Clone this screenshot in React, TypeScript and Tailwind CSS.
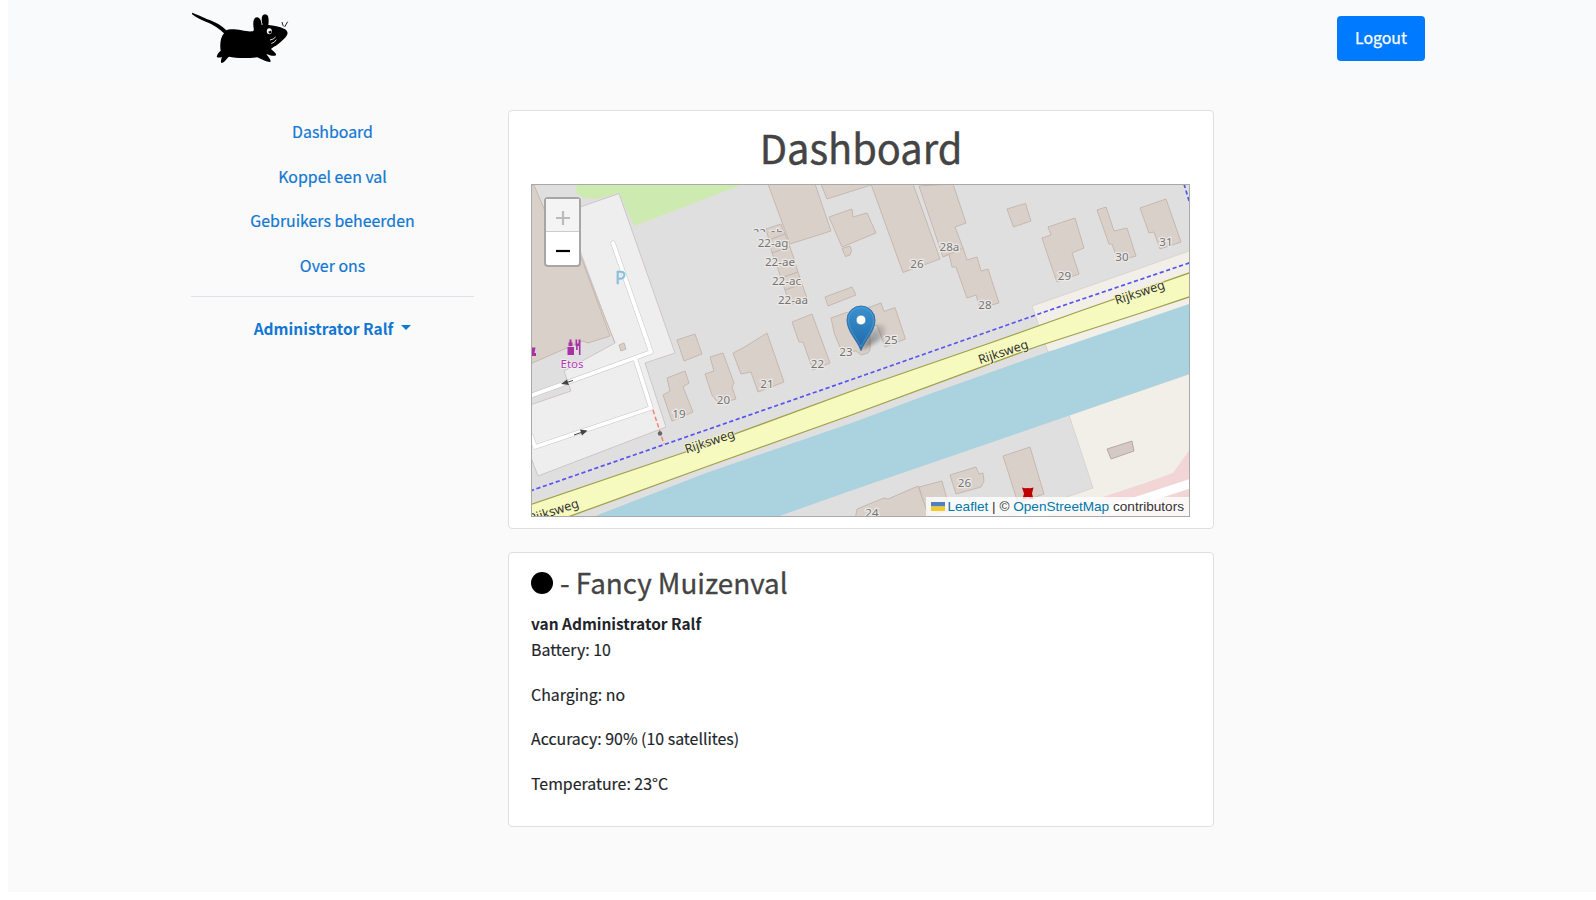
import React from 'react';

const buildings: string[] = [
  '530,185 534,185 545,211 562,205 610,336 588,343 583,341 530,364',
  '768,184 815,184 831,231 790,244',
  '821,184 827,199 871,185 871,184',
  '829,217 852,209 853,217 867,213 876,233 842,247',
  '871,184 903,272.5 940,259 913,184',
  '919,186 953,184 966,223 955,227 963,248 967,260 977,257 981,271 988,269 999,303 980,308 976,295 967,298 956,267 952,267 949,254 943,257',
  '1007,209 1025.5,203.5 1031,221 1013.5,227',
  '1048,227 1075,218 1084,248 1072,253 1079,274 1057,282 1050,262 1042,238 1051,235',
  '1097,210 1106,207 1114,231 1127,228 1136,256 1118,261 1112,244 1109,244',
  '1140,208 1166,199 1181,242 1160,249 1154,232 1149,233',
  '825,297 852,287 856,295 828,306',
  '677,340 695,334 702,354 684,361',
  '667,378 685,371 689,383 683,387 693,412 672,421 663,395 670,391',
  '710,357 723,353 734,383 732,387 736,399 719,404 712,395 705,374 714,371',
  '733,353 743,348 767,333 784,382 758,392 751,372 741,374',
  '792,322 812,314 830,363 813,370 803,342 799,342',
  '831,318 845,313 870,307 870,350 868,353 861,355 856,351 842,352 835,335 834,332',
  '862,310 881,303 884,311.5 895,307.5 905.5,339 885,347 877,325 868,328',
  '950,475 976,467 979,474 983,473 984,481 981,487 956,494',
  '1003,456 1030,447 1044,494 1018,503',
  '919,487 942,481 950,510 928,516',
  '855,520 857,509 884,498 888,499 918,486 930,520',
  '619,345 624,343 626,349 621,351',
];

const terraces: string[] = [
  '766,229 781,224 785,234 769,240',
  '769,240 785,234 790,247 772,253',
  '772,253 790,247 794,259 777,266',
  '777,266 794,259 798,272 781,278',
  '781,278 798,272 802,284 785,290',
  '785,290 802,284 807,298 790,305',
];

const houseNumbers: [string, number, number][] = [
  ['26', 917, 268], ['28a', 949.5, 251], ['28', 985, 308.5], ['29', 1064.5, 280],
  ['30', 1122, 260.5], ['31', 1166, 246], ['25', 891, 344], ['23', 846, 356],
  ['22', 817.5, 367.5], ['21', 767, 388], ['20', 723.5, 404], ['19', 679, 418],
  ['26', 964.5, 487], ['24', 872, 517],
  ['22-ag', 773, 247], ['22-ae', 780, 265.5], ['22-ac', 786.5, 284.5], ['22-aa', 793, 303.5],
];

const roadNames: [string, number, number][] = [
  ['Rijksweg', 711, 445.5],
  ['Rijksweg', 1004.5, 356],
  ['Rijksweg', 1141, 296.5],
  ['Rijksweg', 555, 515],
];

function MapCanvas() {
  return (
    <svg
      viewBox="532 185 657 331"
      className="block h-full w-full font-['Noto_Sans',sans-serif]"
      role="img"
      aria-label="Map"
    >
      <defs>
        <linearGradient id="pin" x1="0" y1="0" x2="0" y2="1">
          <stop offset="0" stopColor="#3a92cf" />
          <stop offset="1" stopColor="#2068a8" />
        </linearGradient>
        <linearGradient id="pinShadow" x1="0" y1="1" x2="1" y2="0">
          <stop offset="0" stopColor="#000" stopOpacity="0.5" />
          <stop offset="1" stopColor="#000" stopOpacity="0.08" />
        </linearGradient>
        <filter id="soft" x="-30%" y="-30%" width="160%" height="160%">
          <feGaussianBlur stdDeviation="2" />
        </filter>
        <clipPath id="tileEdge">
          <rect x="740" y="220" width="60" height="12" />
        </clipPath>
      </defs>
      <rect x="530" y="183" width="662" height="336" fill="#e0dfdf" />
      <g stroke="#d3d0cb" strokeWidth="0.8">
        <polygon points="1032,306 1192,250 1192,320 1048,352" fill="#f2efe9" />
        <polygon points="1069,415 1192,373 1192,520 1000,520 1093,488" fill="#f2efe9" />
      </g>
      <polygon points="1190,449 1173,473 1145,483 1103,497 1040,518 1192,518" fill="#f2d5d5" />
      <path d="M1110,510 L1192,483" stroke="#fff" strokeWidth="9" />
      <polygon points="576,184 744,184 634,226 619,193 598,199 584,198 577,194" fill="#cdebb0" />
      <polygon
        points="580,207 619,193.5 675,353 645,363 666,427 538,476 530,455 530,405 571,391 564,371 615,343 605,318 576,240"
        fill="#eeeeee"
        stroke="#c9c2c4"
        strokeWidth="0.9"
      />
      <path d="M577,247 L615,343" stroke="#c9b9b2" strokeWidth="0.9" />

      <g fill="none" strokeLinecap="round" strokeLinejoin="round">
        <path d="M613,243 L651,352 L530,396 M635,358 L651,408 L535,447 L531,436" stroke="#c9c9c9" strokeWidth="5" />
        <path d="M613,243 L651,352 L530,396 M635,358 L651,408 L535,447 L531,436" stroke="#fff" strokeWidth="3.9" />
      </g>
      <g stroke="#444" fill="#444" strokeWidth="1">
        <path d="M573,380.5 L565,383" />
        <path d="M561,384 L567,379.5 L569,385 Z" stroke="none" />
        <path d="M574,435 L584,431.5" />
        <path d="M587.5,430.5 L580,429.5 L582,435.5 Z" stroke="none" />
      </g>

      <g fill="#d9d0c9" stroke="#c6b8af" strokeWidth="1">
        {buildings.map((points) => <polygon key={points} points={points} />)}
        {terraces.map((points) => <polygon key={points} points={points} />)}
        <path d="M842,248.5 L850,246 Q853,251 850,255 L845.5,256.5 Z" />
        <path d="M943,257 L963,248" />
      </g>
      <polygon points="1107,449 1132,441 1134,451 1111,459" fill="#d4c9c6" stroke="#b3a29c" strokeWidth="0.9" />

      <polygon
        points="590,518 706,473 850,423.5 935,392 1048,352 1192,303 1192,373 1068,416 850,491 774,518"
        fill="#aad3df"
      />

      <polygon
        points="528,505.5 687,451.5 860,388 993,342 1083,310 1192,272 1192,296 1150,310 1037,346.5 850,415.5 707,466.5 565,518 528,530"
        fill="#f7fabf"
        stroke="#a0a04a"
        strokeWidth="1.3"
      />
      <path
        d="M530,491 L663,445 L859,377 L1050,310 L1192,262 M1184,184 L1190,204"
        fill="none"
        stroke="#5753f0"
        strokeWidth="1.7"
        strokeDasharray="4.2 2.6"
      />
      <path d="M653,410 L664,444" stroke="#fa8072" strokeWidth="1.5" strokeDasharray="4.5 2.5" />
      <circle cx="660" cy="433.5" r="2.2" fill="#666" />

      <text x="620.5" y="283.5" textAnchor="middle" fontSize="18" fill="#84bfe0" stroke="#84bfe0" strokeWidth="0.4">P</text>
      <g fill="#a632a6">
        <path d="M567.5,347 h6.5 v8 h-6.5 z M568.5,342.5 h4 v3.5 h-4 z M569.5,339.5 h2 v3 h-2 z" />
        <path d="M575.5,339.5 h1.6 v4 h1.4 v-4 h2 v15.5 h-1.6 v-9 h-1.2 v4 h-1.6 v-4 h-0.6 z" />
        <path d="M532,347.5 L535.5,347.5 L534.5,353 H536 V356 H532 Z" />
      </g>
      <text x="572" y="368" textAnchor="middle" fontSize="11.5" fill="#ac39ac" stroke="#f4f0f4" strokeWidth="1.6" paintOrder="stroke">
        Etos
      </text>

      <g fontSize="11.6" fill="#747474" stroke="#ebe8e6" strokeWidth="2.6" paintOrder="stroke" textAnchor="middle">
        <text x="768" y="237" clipPath="url(#tileEdge)">22-ah</text>
        {houseNumbers.map(([label, x, y]) => (
          <text key={`${label}-${x}`} x={x} y={y}>{label}</text>
        ))}
      </g>
      <g fontSize="12.6" fill="#333" stroke="#f7fabf" strokeWidth="1.6" paintOrder="stroke" textAnchor="middle">
        {roadNames.map(([label, x, y]) => (
          <text key={x} x={x} y={y} transform={`rotate(-18.5 ${x} ${y})`}>{label}</text>
        ))}
      </g>
      <path d="M1022,487.5 Q1025,488.5 1027.5,488 Q1030,488.5 1033.5,487.5 L1032,493.5 L1033.5,499 L1029.5,499 Q1028,495 1026,499 L1022.5,499 L1024,493.5 Z" fill="#bf0000" />

      <path d="M861,350 L872,330 Q880,321 885,327 Q887,334 878,341 Z" fill="url(#pinShadow)" filter="url(#soft)" />
      <path
        d="M861,350.5 C857,340 847,331.5 847,320 A14,14 0 0 1 875,320 C875,331.5 865,340 861,350.5 Z"
        fill="url(#pin)"
        stroke="#2b6ea6"
        strokeWidth="0.9"
      />
      <path
        d="M861,347 C857,338 848.5,330 848.5,320 A12.5,12.5 0 0 1 873.5,320 C873.5,330 865,338 861,347 Z"
        fill="none"
        stroke="#6db0de"
        strokeOpacity="0.5"
        strokeWidth="0.9"
      />
      <circle cx="861" cy="320" r="4.9" fill="#fff" stroke="#2b6ea6" strokeWidth="0.7" />
    </svg>
  );
}

function MouseLogo() {
  return (
    <svg viewBox="33 33 294 160" className="h-[53.3px] w-[98px]" role="img" aria-label="Logo">
      <path
        d="M36,38 C52,43 66,51 82,58 C106,66 126,78 139,91 C150,86 165,88 185,91 C198,94 208,95 219,94 C224,90 220,85 220,75 C219,60 223,52 231,52 C240,53 244,62 245,75 L248,74 C243,60 244,43 255,43 C267,43 267,60 265,75 C280,76 300,80 312,86 C322,90 325,98 321,106 C315,116 303,126 294,133 C286,139 276,143 273,147 C280,153 290,160 288,166 C280,170 268,165 259,162 C264,170 275,180 271,186 C262,187 244,178 232,172 C205,175 165,175 147,170 C139,176 134,188 124,189 C121,184 124,177 126,171 C120,173 113,174 110,170 C112,162 118,155 122,152 C119,135 121,112 132,100 C122,89 98,72 77,65 C62,59 46,51 36,43 Z"
        fill="#000"
      />
      <path d="M310,79 L306,66 M314,81 L323,65" stroke="#222" strokeWidth="3" fill="none" />
      <ellipse cx="268" cy="94" rx="7.5" ry="9" fill="#fff" />
      <circle cx="270" cy="96" r="4.5" fill="#000" />
      <circle cx="269" cy="92" r="2" fill="#fff" />
      <path d="M270,120 Q280,119 287,111 M274,131 Q284,128 289,119" stroke="#fff" strokeWidth="2.5" fill="none" />
    </svg>
  );
}

const navItems = ['Dashboard', 'Koppel een val', 'Gebruikers beheerden', 'Over ons'];
const readings = ['Battery: 10', 'Charging: no', 'Accuracy: 90% (10 satellites)', 'Temperature: 23°C'];

export default function App() {
  return (
    <div className="h-[900px] w-full overflow-hidden bg-white pb-2 pl-2 font-['Noto_Sans_CJK_SC',sans-serif] text-[15.9px] leading-[26.7px] text-[#212529]">
      <div className="h-full bg-[#fafafa]">
        <header className="flex h-[78px] items-start justify-between bg-[#f8fafc] pr-[171px] pl-[183px]">
          <a className="mt-[11px]" href="#home"><MouseLogo /></a>
          <button className="mt-4 flex h-[45px] w-[88px] items-center justify-center rounded-[4px] bg-[#007bff] pb-px text-white [-webkit-text-stroke:0.25px_currentColor]">
            Logout
          </button>
        </header>

        <div className="flex items-start pt-8 pl-[183px]">
          <nav className="w-[283px] text-center text-[#1277d2]">
            {navItems.map((item) => (
              <a key={item} href="#nav" className="flex h-[44.5px] items-center justify-center pt-[0.6px] [-webkit-text-stroke:0.2px_currentColor]">{item}</a>
            ))}
            <div className="mt-[8px] border-t border-[#dfe3e8]" />
            <a href="#user" className="mt-[10px] flex h-[44.5px] items-center justify-center pb-[2px] text-[15.5px] font-bold">
              <span>Administrator Ralf</span>
              <span className="mb-[1px] ml-2 border-x-[5px] border-t-[5px] border-x-transparent border-t-[#1277d2]" />
            </a>
          </nav>

          <main className="ml-[34px] flex w-[706px] flex-col gap-[23px]">
            <section className="flex h-[419px] flex-col rounded-[4px] border border-[#dfdfdf] bg-white px-[22px]">
              <h1 className="mt-[8px] h-[65px] text-center text-[39.8px] leading-[56px] text-[#444] [-webkit-text-stroke:0.4px_currentColor]">Dashboard</h1>
              <div className="relative h-[333px] w-[659px] border border-[#a9a9a9]">
                <MapCanvas />
                <div className="absolute top-3 left-3 flex h-[70px] w-[37px] flex-col rounded-[4px] border-2 border-[#a8a6a5] bg-white">
                  <button aria-label="Zoom in" className="flex h-[33px] items-center justify-center border-b border-[#ccc] bg-[#f4f4f4]">
                    <svg viewBox="0 0 14 14" className="mt-[5px] h-[14px] w-[14px]"><path d="M7 0V14M0 7H14" stroke="#bbb" strokeWidth="2.2" /></svg>
                  </button>
                  <button aria-label="Zoom out" className="flex flex-1 items-center justify-center">
                    <svg viewBox="0 0 14 14" className="mt-1 h-[14px] w-[14px]"><path d="M0 7H14" stroke="#000" strokeWidth="2.2" /></svg>
                  </button>
                </div>
                <div className="absolute right-0 bottom-0 flex h-[19px] w-[263px] items-center justify-end bg-white/80 pr-[5px] font-['Liberation_Sans',sans-serif] text-[13.6px] leading-[19px] whitespace-pre text-[#333]">
                  <svg viewBox="0 0 14 9" className="mr-[3px] h-[9px] w-[14px]">
                    <path d="M0 0h14v4.5H0z" fill="#4f80c0" />
                    <path d="M0 4.5h14V9H0z" fill="#f2cb28" />
                  </svg>
                  <span className="text-[#0078a8]">Leaflet</span>
                  <span> | © </span>
                  <span className="text-[#0078a8]">OpenStreetMap</span>
                  <span> contributors</span>
                </div>
              </div>
            </section>

            <section className="h-[275px] rounded-[4px] border border-[#dfdfdf] bg-white px-[22px]">
              <h2 className="mt-[9px] flex h-[40px] items-center text-[27.8px] leading-[40px] text-[#444] [-webkit-text-stroke:0.3px_currentColor]">
                <span className="mt-px mr-[7px] h-[22px] w-[22px] rounded-full bg-black" />
                - Fancy Muizenval
              </h2>
              <p className="mt-[8px] text-[15.45px] font-bold">van Administrator Ralf</p>
              <div className="mt-[0.6px] flex flex-col gap-[17.9px] [-webkit-text-stroke:0.15px_currentColor]">
                {readings.map((reading) => <p key={reading}>{reading}</p>)}
              </div>
            </section>
          </main>
        </div>
      </div>
    </div>
  );
}
